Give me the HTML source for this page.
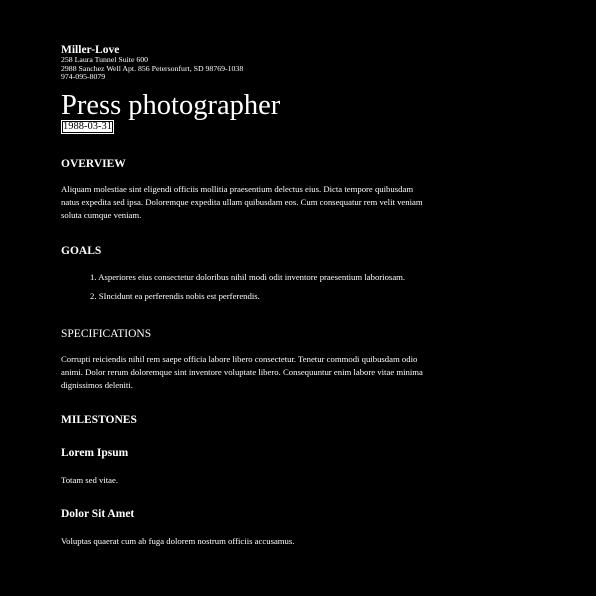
<!DOCTYPE html>
<html><head><meta charset="utf-8"><style>
body{margin:0;background:#000;color:#fff;font-family:"Liberation Serif",serif;width:596px;height:596px;overflow:hidden}
.w{position:absolute;left:61px;width:363px;font-size:8.7px;line-height:13px}
.a{position:absolute;left:61px}
h3{margin:0;font-size:11.5px;font-weight:bold;position:absolute;left:61px}
p{margin:0}
</style></head><body>
<div class="a" style="top:44px;font-size:11.5px;font-weight:bold">Miller-Love</div>
<div class="a" style="top:56px;font-size:7.8px;line-height:8.5px">258 Laura Tunnel Suite 600<br>2988 Sanchez Well Apt. 856 Petersonfurt, SD 98769-1038<br>974-095-8079</div>
<div class="a" style="top:89px;font-size:28.5px;line-height:34px">Press photographer</div>
<div class="a" style="top:120px;background:#fff;padding:1px;height:12px"><div style="border:1px solid #000;color:#000;font-size:10.5px;line-height:10px;height:10px">1988-03-31</div></div>
<h3 style="top:158px">OVERVIEW</h3>
<div class="w" style="top:183px">Aliquam molestiae sint eligendi officiis mollitia praesentium delectus eius. Dicta tempore quibusdam natus expedita sed ipsa. Doloremque expedita ullam quibusdam eos. Cum consequatur rem velit veniam soluta cumque veniam.</div>
<h3 style="top:245px">GOALS</h3>
<div class="a" style="top:272px;left:90px;font-size:8.7px">1. Asperiores eius consectetur doloribus nihil modi odit inventore praesentium laboriosam.</div>
<div class="a" style="top:291px;left:90px;font-size:8.7px">2. SIncidunt ea perferendis nobis est perferendis.</div>
<h3 style="top:328px;font-weight:normal">SPECIFICATIONS</h3>
<div class="w" style="top:353px">Corrupti reiciendis nihil rem saepe officia labore libero consectetur. Tenetur commodi quibusdam odio animi. Dolor rerum doloremque sint inventore voluptate libero. Consequuntur enim labore vitae minima dignissimos deleniti.</div>
<h3 style="top:414px">MILESTONES</h3>
<h3 style="top:447px">Lorem Ipsum</h3>
<div class="a" style="top:475px;font-size:8.7px">Totam sed vitae.</div>
<h3 style="top:508px">Dolor Sit Amet</h3>
<div class="a" style="top:536px;font-size:8.7px">Voluptas quaerat cum ab fuga dolorem nostrum officiis accusamus.</div>
</body></html>
